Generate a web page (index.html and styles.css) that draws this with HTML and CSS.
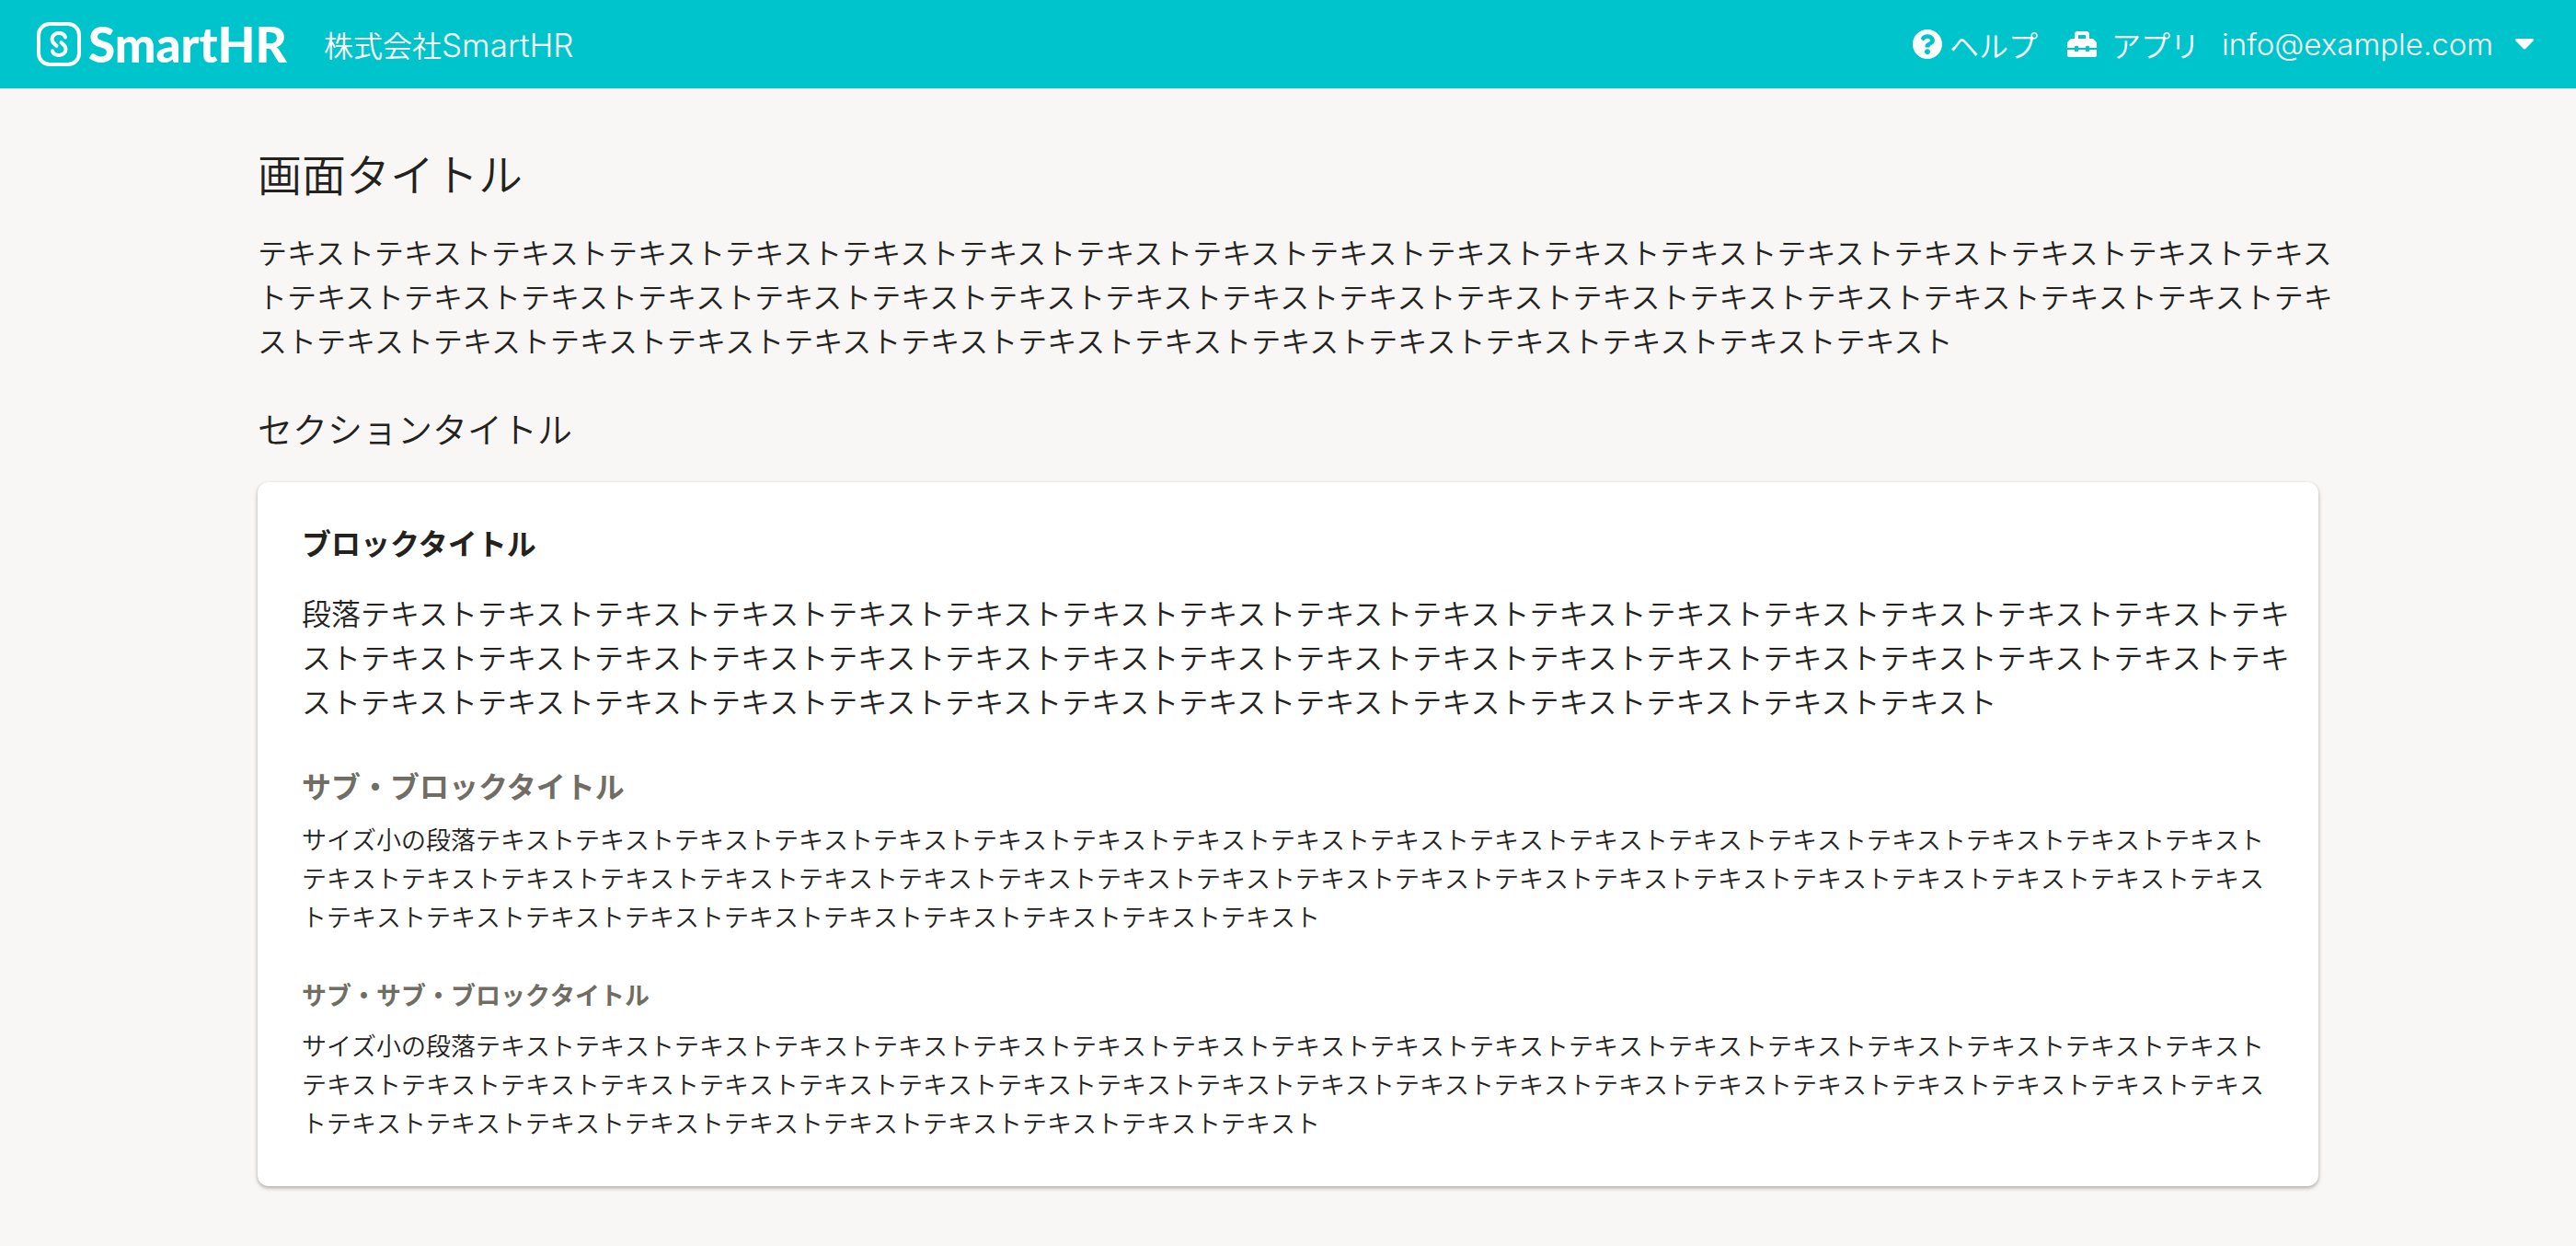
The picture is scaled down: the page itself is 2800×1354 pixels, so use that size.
FILE: index.html
```html
<!DOCTYPE html>
<html lang="ja">
<head>
<meta charset="utf-8">
<meta name="viewport" content="width=device-width, initial-scale=1">
<title>画面タイトル</title>
<link rel="stylesheet" href="styles.css">
</head>
<body>
<header class="header">
  <a class="logo" href="#">
    <svg class="logo-mark" viewBox="0 0 48 48" aria-hidden="true">
      <rect x="2" y="2" width="44" height="44" rx="12" fill="none" stroke="#fff" stroke-width="4"/>
      <path d="M31 16.500C30 13 27.500 12 24 12C19.500 12 16.500 15 16.500 18.500C16.500 22.500 19 24 21.500 25.800" fill="none" stroke="#fff" stroke-width="4" stroke-linecap="round"/>
      <path d="M17 31.500C18 35 20.500 36 24 36C28.500 36 31.500 33 31.500 29.500C31.500 25.500 29 24 26.500 22.200" fill="none" stroke="#fff" stroke-width="4" stroke-linecap="round"/>
    </svg>
    <span class="logo-text">SmartHR</span>
  </a>
  <span class="company">株式会社<span class="company-latin">SmartHR</span></span>
  <nav class="nav">
    <a class="nav-item" href="#">
      <svg class="icon-help" viewBox="8 8 496 496" aria-hidden="true"><path fill="currentColor" d="M504 256c0 137-111 248-248 248S8 393 8 256C8 119.100 119 8 256 8s248 111.100 248 248zM262.700 90c-54.500 0-89.300 23-116.500 63.800-3.500 5.300-2.400 12.400 2.700 16.300l34.700 26.300c5.200 3.900 12.600 3 16.700-2.100 17.900-22.700 30.100-35.800 57.300-35.800 20.400 0 45.700 13.100 45.700 33 0 15-12.400 22.700-32.500 34C247.100 238.500 216 255 216 296v4c0 6.600 5.400 12 12 12h56c6.600 0 12-5.400 12-12v-1.300c0-28.500 83.200-29.600 83.200-106.700 0-58-60.200-102-116.500-102zM256 338c-25.400 0-46 20.600-46 46s20.600 46 46 46 46-20.600 46-46-20.600-46-46-46z"/></svg>
      <span>ヘルプ</span>
    </a>
    <a class="nav-item nav-item-apps" href="#">
      <svg class="icon-apps" viewBox="0 0 512 512" aria-hidden="true"><path fill="currentColor" d="M502.600 214.600l-45.300-45.300c-6-6-14.100-9.400-22.600-9.400H384V80c0-26.500-21.500-48-48-48H176c-26.500 0-48 21.500-48 48v80H77.300c-8.500 0-16.600 3.400-22.600 9.400L9.400 214.600c-6 6-9.400 14.100-9.400 22.600V320h128v-16c0-8.800 7.200-16 16-16h32c8.800 0 16 7.200 16 16v16h128v-16c0-8.800 7.200-16 16-16h32c8.800 0 16 7.200 16 16v16h128v-82.700c0-8.500-3.400-16.700-9.400-22.700zM320 160H192V96h128v64zm64 208c0 8.800-7.200 16-16 16h-32c-8.800 0-16-7.200-16-16v-16H192v16c0 8.800-7.200 16-16 16h-32c-8.800 0-16-7.200-16-16v-16H0v96c0 17.700 14.300 32 32 32h448c17.700 0 32-14.300 32-32v-96H384v16z"/></svg>
      <span>アプリ</span>
    </a>
    <button class="account" type="button">
      <span>info@example.com</span>
      <svg class="icon-caret" viewBox="0 0 20 12" aria-hidden="true"><path fill="currentColor" d="M2 0H18C20 0 20.500 1.500 19.400 2.600L11.400 10.800C10.600 11.600 9.400 11.600 8.600 10.800L.6 2.600C-.5 1.500 0 0 2 0Z"/></svg>
    </button>
  </nav>
</header>
<main class="main">
  <h1 class="screen-title">画面タイトル</h1>
  <p class="lead">テキストテキストテキストテキストテキストテキストテキストテキストテキストテキストテキストテキストテキストテキストテキストテキストテキストテキストテキストテキストテキストテキストテキストテキストテキストテキストテキストテキストテキストテキストテキストテキストテキストテキストテキストテキストテキストテキストテキストテキストテキストテキストテキストテキストテキストテキストテキストテキストテキストテキスト</p>
  <section class="section">
    <h2 class="section-title">セクションタイトル</h2>
    <div class="card">
      <h3 class="block-title">ブロックタイトル</h3>
      <p class="block-text">段落テキストテキストテキストテキストテキストテキストテキストテキストテキストテキストテキストテキストテキストテキストテキストテキストテキストテキストテキストテキストテキストテキストテキストテキストテキストテキストテキストテキストテキストテキストテキストテキストテキストテキストテキストテキストテキストテキストテキストテキストテキストテキストテキストテキストテキストテキストテキストテキスト</p>
      <h4 class="sub-title">サブ・ブロックタイトル</h4>
      <p class="text-small">サイズ小の段落テキストテキストテキストテキストテキストテキストテキストテキストテキストテキストテキストテキストテキストテキストテキストテキストテキストテキストテキストテキストテキストテキストテキストテキストテキストテキストテキストテキストテキストテキストテキストテキストテキストテキストテキストテキストテキストテキストテキストテキストテキストテキストテキストテキストテキストテキストテキストテキスト</p>
      <h5 class="sub-sub-title">サブ・サブ・ブロックタイトル</h5>
      <p class="text-small">サイズ小の段落テキストテキストテキストテキストテキストテキストテキストテキストテキストテキストテキストテキストテキストテキストテキストテキストテキストテキストテキストテキストテキストテキストテキストテキストテキストテキストテキストテキストテキストテキストテキストテキストテキストテキストテキストテキストテキストテキストテキストテキストテキストテキストテキストテキストテキストテキストテキストテキスト</p>
    </div>
  </section>
</main>
</body>
</html>
```
FILE: styles.css
```css
* {
  box-sizing: border-box;
}

body {
  margin: 0;
  min-height: 100vh;
  background: #f8f7f6;
  color: #23221e;
  font-family: "Noto Sans CJK JP", sans-serif;
  font-size: 32px;
  font-weight: 350;
  line-height: 48px;
}

h1, h2, h3, h4, h5, p {
  margin: 0;
}

.header {
  display: flex;
  align-items: center;
  height: 96px;
  padding: 0 46px 0 40px;
  background: #00c4cc;
  color: #fff;
  white-space: nowrap;
}

.logo {
  display: flex;
  align-items: center;
  gap: 8px;
  color: inherit;
  text-decoration: none;
}

.logo-mark {
  width: 48px;
  height: 48px;
}

.logo-text {
  font-family: Lato, sans-serif;
  font-size: 53px;
  font-weight: 900;
}

.company {
  margin-left: 40px;
}

.company-latin {
  font-family: Inter, sans-serif;
  font-size: 35px;
  font-weight: 300;
}

.nav {
  display: flex;
  align-items: center;
  margin-left: auto;
}

.nav-item {
  display: flex;
  align-items: center;
  gap: 8px;
  margin-right: 32px;
  color: inherit;
  text-decoration: none;
}

.nav-item-apps {
  gap: 16px;
  margin-right: 24px;
}

.icon-help,
.icon-apps {
  width: 32px;
  height: 32px;
}

.account {
  display: flex;
  align-items: center;
  gap: 24px;
  padding: 0;
  border: 0;
  background: none;
  color: inherit;
  font-family: Inter, sans-serif;
  font-size: 33px;
  font-weight: 300;
  line-height: inherit;
  cursor: pointer;
}

.icon-caret {
  width: 20px;
  height: 12px;
}

.main {
  max-width: 2368px;
  margin: 0 auto;
  padding: 61px 64px;
}

.screen-title {
  font-size: 48px;
  font-weight: inherit;
  line-height: 60px;
}

.lead {
  margin: 32px -24px 0 0;
}

.section {
  margin-top: 48px;
}

.section-title {
  font-size: 38px;
  font-weight: inherit;
  font-kerning: none;
  line-height: 48px;
}

.card {
  margin-top: 35px;
  padding: 45px 48px 48px;
  border-radius: 12px;
  background: #fff;
  box-shadow: 0 2px 4px rgba(51, 51, 51, 0.4);
}

.block-title {
  font-size: 32px;
  font-weight: 700;
  line-height: 40px;
}

.block-text {
  margin: 32px -24px 0 0;
}

.sub-title {
  margin-top: 48px;
  color: #706d65;
  font-size: 32px;
  font-weight: 700;
  line-height: 40px;
}

.sub-sub-title {
  margin-top: 48px;
  color: #706d65;
  font-size: 27px;
  font-weight: 700;
  font-kerning: none;
  line-height: 32px;
}

.text-small {
  margin-top: 18px;
  font-size: 27px;
  font-kerning: none;
  line-height: 42px;
}
```
